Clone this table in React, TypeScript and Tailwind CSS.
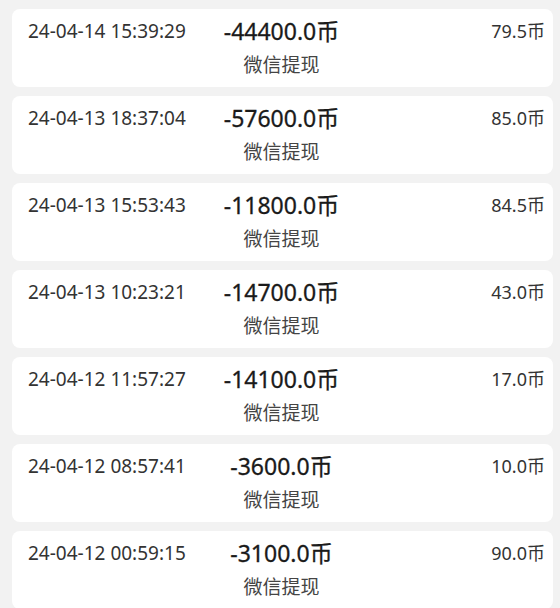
type Record = {
  time: string;
  amount: string;
  fee: string;
};

const records: Record[] = [
  { time: "24-04-14 15:39:29", amount: "-44400.0", fee: "79.5" },
  { time: "24-04-13 18:37:04", amount: "-57600.0", fee: "85.0" },
  { time: "24-04-13 15:53:43", amount: "-11800.0", fee: "84.5" },
  { time: "24-04-13 10:23:21", amount: "-14700.0", fee: "43.0" },
  { time: "24-04-12 11:57:27", amount: "-14100.0", fee: "17.0" },
  { time: "24-04-12 08:57:41", amount: "-3600.0", fee: "10.0" },
  { time: "24-04-12 00:59:15", amount: "-3100.0", fee: "90.0" },
];

function RecordCard({ record }: { record: Record }) {
  return (
    <div className="ml-[12px] mr-[7px] h-[78px] shrink-0 rounded-[8px] bg-white pt-[8px] pl-[16px] pr-[8px]">
      <div className="flex h-[28px] items-center">
        <div className="w-[180px] text-[19px] leading-[28px] text-[#333]">{record.time}</div>
        <div className="flex-1 text-center text-[23px] leading-[28px] text-[#1a1a1a] [-webkit-text-stroke:0.3px_#1a1a1a]">
          {record.amount}币
        </div>
        <div className="w-[190px] text-right text-[18px] leading-[28px] text-[#333]">{record.fee}币</div>
      </div>
      <div className="mt-[7px] flex">
        <div className="w-[180px]" />
        <div className="flex-1 text-center text-[19px] leading-[26px] text-[#444]">微信提现</div>
        <div className="w-[190px]" />
      </div>
    </div>
  );
}

export default function App() {
  return (
    <div
      className="flex h-[608px] w-[560px] flex-col gap-[9px] overflow-hidden bg-[#f2f2f2] pt-[9px]"
      style={{ fontFamily: '"Noto Sans", "Noto Sans CJK SC", sans-serif' }}
    >
      {records.map((r) => (
        <RecordCard key={r.time} record={r} />
      ))}
    </div>
  );
}
